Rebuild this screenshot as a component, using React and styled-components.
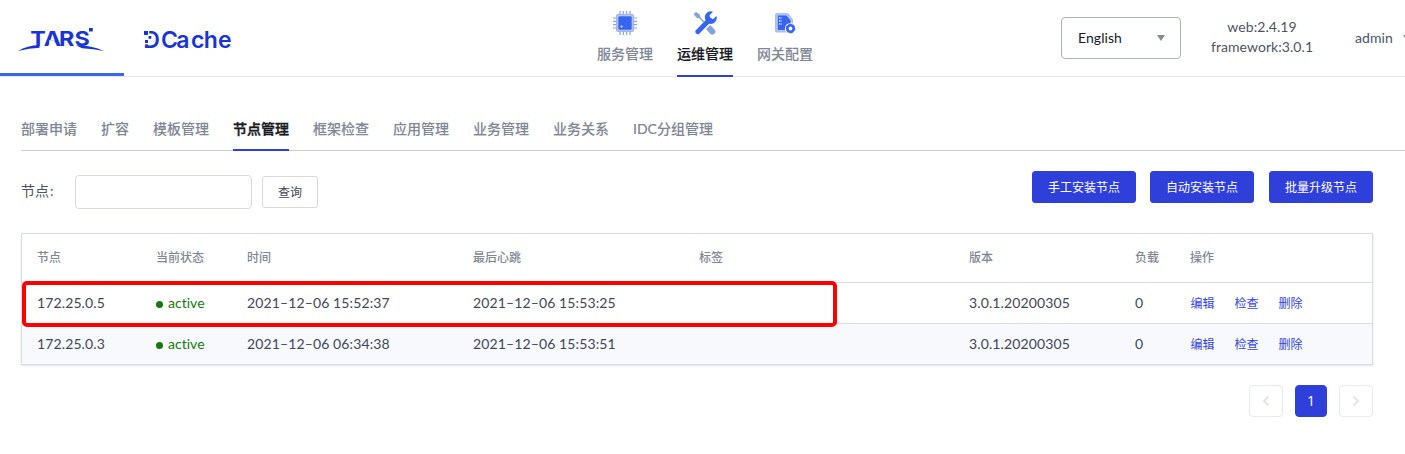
import React from "react";
import styled, { createGlobalStyle } from "styled-components";

const Global = createGlobalStyle`
  * { box-sizing: border-box; }
  body {
    margin: 0;
    background: #fff;
    overflow: hidden;
    color: #3f465a;
    font: 14px/20px Lato, "Noto Sans CJK SC", sans-serif;
  }
  button, input { font: inherit; }
`;

const Page = styled.div`
  height: 454px;
  overflow: hidden;
`;

const Header = styled.header`
  display: grid;
  grid-template-columns: 597px 464px 1fr;
  height: 77px;
  border-bottom: 1px solid #e4e6e8;
`;

const Brands = styled.div`
  display: flex;
  height: 76px;
`;

const Brand = styled.a`
  width: 124px;
  height: 76px;
  border-bottom: 3px solid ${(p) => (p.$active ? "#3a66f0" : "transparent")};
  svg { display: block; }
`;

const MainNav = styled.nav`
  display: flex;
  gap: 24px;
  height: 77px;
`;

const NavItem = styled.a`
  display: flex;
  flex-direction: column;
  align-items: center;
  width: 56px;
  padding-top: 11px;
  font-weight: 500;
  -webkit-text-stroke: ${(p) => (p.$active ? 0.2 : 0.08)}px currentColor;
  color: ${(p) => (p.$active ? "#17191f" : "#7f8796")};
  border-bottom: 2px solid ${(p) => (p.$active ? "#2f3fda" : "transparent")};
  svg { display: block; margin-bottom: 9px; }
`;

const Tools = styled.div`
  display: flex;
  align-items: flex-start;
  padding-top: 17px;
  white-space: nowrap;
  letter-spacing: 0.06px;
`;

const Select = styled.div`
  display: flex;
  align-items: center;
  justify-content: space-between;
  width: 120px;
  height: 42px;
  padding: 0 15px 0 16px;
  border: 1px solid #acb0c0;
  border-radius: 4px;
  color: #17191f;
`;

const Caret = styled.i`
  flex: none;
  border: solid transparent;
  border-width: 6px 4px 0;
  border-top-color: #838b9a;
`;

const Version = styled.div`
  width: 102px;
  margin-left: 30px;
  text-align: center;
  color: #4d5365;
`;

const User = styled.div`
  display: flex;
  align-items: center;
  gap: 10px;
  height: 42px;
  margin-left: 42px;
  color: #4d5365;
`;

const Main = styled.main`
  padding-left: 21px;
`;

const Tabs = styled.nav`
  display: flex;
  gap: 24px;
  height: 74px;
  border-bottom: 1px solid #cacbd6;
`;

const Tab = styled.a`
  height: 74px;
  padding-top: 42px;
  font-weight: 500;
  -webkit-text-stroke: ${(p) => (p.$active ? 0.4 : 0.08)}px currentColor;
  color: ${(p) => (p.$active ? "#17191f" : "#7f8796")};
  border-bottom: 2px solid ${(p) => (p.$active ? "#2f3fda" : "transparent")};
`;

const Content = styled.section`
  width: 1352px;
`;

const Toolbar = styled.div`
  display: flex;
  align-items: flex-start;
  justify-content: space-between;
  padding-top: 20px;
  height: 82px;
`;

const Search = styled.label`
  display: flex;
  align-items: center;
  padding-top: 4px;
  color: #4d5365;
`;

const SearchLabel = styled.span`
  width: 54px;
  padding-bottom: 2px;
  white-space: nowrap;
  i { font-style: normal; margin-left: 1px; }
`;

const Input = styled.input`
  width: 177px;
  height: 34px;
  border: 1px solid #d6d7e3;
  border-radius: 4px;
  margin: 0 10px 0 0;
`;

const Button = styled.button`
  height: 32px;
  padding: 1px 0 0;
  width: ${(p) => (p.$primary ? 104 : 56)}px;
  border: 1px solid ${(p) => (p.$primary ? "#2f3fda" : "#d6d7e3")};
  border-radius: 3px;
  background: ${(p) => (p.$primary ? "#2f3fda" : "#fff")};
  color: ${(p) => (p.$primary ? "#fff" : "#3f4454")};
  font-size: 12px;
  line-height: 18px;
`;

const Actions = styled.div`
  display: flex;
  gap: 14px;
  button:last-child { margin-left: 1px; }
`;

const Table = styled.div`
  position: relative;
  border: 1px solid #d9dbe7;
  box-shadow: 0 1px 2px rgba(60, 70, 130, 0.15);
`;

const Row = styled.div`
  display: grid;
  grid-template-columns: 119px 91px 226px 226px 270px 166px 55px 1fr;
  align-items: center;
  height: ${(p) => (p.$head ? 48 : 41)}px;
  padding-left: 15px;
  ${(p) => !p.$head && "border-top: 1px solid #d9dbe7;"}
  background: ${(p) => (p.$striped ? "#f8f9fc" : "#fff")};
  color: ${(p) => (p.$head ? "#7f8796" : "#3f465a")};
  font-size: ${(p) => (p.$head ? 12 : 14)}px;
  font-weight: ${(p) => (p.$head ? 500 : 400)};
  letter-spacing: ${(p) => (p.$head ? 0 : 0.12)}px;
`;

const Status = styled.span`
  display: flex;
  align-items: center;
  gap: 5px;
  letter-spacing: 0.02px;
  font-variant-ligatures: none;
  color: #147a0b;
  &::before {
    content: "";
    width: 7px;
    height: 7px;
    margin-top: 2px;
    border-radius: 50%;
    background: #147a0b;
  }
`;

const Links = styled.span`
  display: flex;
  gap: 20px;
  padding: 1px 0 0 0.5px;
  font-size: 12px;
  letter-spacing: 0;
  color: #3444dd;
`;

const Highlight = styled.div`
  position: absolute;
  left: 0;
  top: 47px;
  width: 815px;
  height: 46px;
  border: 4px solid #fe0000;
  border-radius: 5px;
`;

const Pagination = styled.div`
  display: flex;
  justify-content: flex-end;
  gap: 12px;
  padding-top: 20px;
`;

const PageButton = styled.button`
  display: flex;
  align-items: center;
  justify-content: center;
  width: ${(p) => (p.$active ? 32 : 34)}px;
  height: 32px;
  padding: 0;
  border: 1px solid ${(p) => (p.$active ? "#2f3fda" : "#e8e8f0")};
  border-radius: 4px;
  background: ${(p) => (p.$active ? "#2f3fda" : "#fff")};
  color: #fff;
  font-family: "Open Sans", sans-serif;
`;

const LogoText = styled.text`
  font-family: Inter, sans-serif;
  font-weight: ${(p) => p.$weight};
  font-size: ${(p) => p.$size}px;
  fill: #1735d6;
`;

const TarsLogo = () => (
  <svg width="124" height="73" viewBox="0 0 124 73">
    <LogoText $size={20.5} $weight={700} transform="scale(1.14 1)" x="26.6 38.4 51.8 65.4" y="46.5">TARS</LogoText>
    <rect x="49.2" y="40.2" width="5.5" height="3.2" fill="#fff" />
    <rect x="89" y="28" width="3.8" height="3.5" fill="#1735d6" />
    <path d="M18 51Q27 45.5 39.5 45V47.8Q29 48 18 51Z" fill="#1735d6" />
    <path d="M76 45.3Q92 45.3 104 51Q94 48.8 82 48.2Z" fill="#1735d6" />
  </svg>
);

const DCacheLogo = () => (
  <svg width="124" height="73" viewBox="0 0 124 73">
    <LogoText $size={23} $weight={600} x="19.3 37 52.3 67 79.8 94" y="47.5">DCache</LogoText>
    <rect x="19" y="30" width="6.2" height="14.3" fill="#fff" />
    <g fill="#1735d6">
      <rect x="20" y="31" width="4" height="4" />
      <rect x="24.5" y="36" width="2.8" height="2.8" />
      <rect x="21" y="40" width="3" height="3" />
    </g>
  </svg>
);

const ServiceIcon = () => (
  <svg width="24" height="24" viewBox="0 0 24 24">
    <path d="M7 0v24M10.3 0v24M13.7 0v24M17 0v24M0 7h24M0 10.3h24M0 13.7h24M0 17h24" stroke="#86a1dd" strokeWidth="1.2" />
    <rect x="3" y="3" width="18" height="18" rx="2" fill="#9db5ea" />
    <rect x="4.5" y="4.5" width="15" height="15" rx="1" fill="#c9d8f8" />
    <rect x="5.3" y="5.3" width="13.4" height="13.4" rx="1" fill="#3765f0" />
    <circle cx="8.5" cy="15.5" r="1.1" fill="#d7e2fb" />
  </svg>
);

const ToolsIcon = () => (
  <svg width="24" height="24" viewBox="0 0 24 24">
    <path d="M.8 3.5Q1.3 1.2 3.5 1.3L6.5 3.3 7.8 7.5 3.5 6.7Z" fill="#86a1dd" />
    <path d="m6 6 8 8" stroke="#86a1dd" strokeWidth="1.4" />
    <path d="m16 17 3.3 3.6" stroke="#86a1dd" strokeWidth="6" strokeLinecap="round" />
    <path d="M6 20.4 16.5 9.8" stroke="#fff" strokeWidth="6.8" />
    <path d="M4.8 20.8 16.5 8.8" stroke="#3765f0" strokeWidth="4.8" strokeLinecap="round" />
    <path d="M20 .8a6 6 0 0 0-7.2 8.8l3 3A6 6 0 0 0 23.4 5l-3.2 3-3-.5-.6-3.2Z" fill="#3765f0" />
  </svg>
);

const GatewayIcon = () => (
  <svg width="24" height="24" viewBox="0 0 24 24">
    <path d="M4 2h9.5q1.4 0 2.3 1.1L20 8.5v13H4a2 2 0 0 1-2-2V4a2 2 0 0 1 2-2Z" fill="#a9bfee" />
    <path d="M4.3 4h8.4q.8 0 1.3.6L18 9.5v10H4.3Z" fill="#3765f0" stroke="#d3dffa" strokeWidth=".7" />
    <path d="M6 7h2.6M6 10h2.6M6 13h2.6" stroke="#dfe8ff" strokeWidth="1.5" strokeDasharray="1.5 .6" />
    <circle cx="17.5" cy="17.5" r="5.6" fill="#fff" />
    <circle cx="17.5" cy="17.5" r="3.2" fill="none" stroke="#3765f0" strokeWidth="2.6" />
    <circle cx="17.5" cy="17.5" r="4.5" fill="none" stroke="#3765f0" strokeWidth=".8" strokeDasharray="2.4 2.3" />
  </svg>
);

const Arrow = ({ right }) => (
  <svg width="10" height="12" viewBox="0 0 10 12" fill="none" stroke="#e3e4ed" strokeWidth="2">
    <path d={right ? "m2.5 1.5 4.5 4.5-4.5 4.5" : "M7.5 1.5 3 6l4.5 4.5"} />
  </svg>
);

const nav = [
  ["服务管理", ServiceIcon],
  ["运维管理", ToolsIcon],
  ["网关配置", GatewayIcon],
];
const tabs = ["部署申请", "扩容", "模板管理", "节点管理", "框架检查", "应用管理", "业务管理", "业务关系", "IDC分组管理"];
const columns = ["节点", "当前状态", "时间", "最后心跳", "标签", "版本", "负载", "操作"];
const nodes = [
  { ip: "172.25.0.5", time: "2021–12–06 15:52:37", beat: "2021–12–06 15:53:25" },
  { ip: "172.25.0.3", time: "2021–12–06 06:34:38", beat: "2021–12–06 15:53:51" },
];

export default function App() {
  return (
    <Page>
      <Global />
      <Header>
        <Brands>
          <Brand $active><TarsLogo /></Brand>
          <Brand><DCacheLogo /></Brand>
        </Brands>
        <MainNav>
          {nav.map(([label, Icon]) => (
            <NavItem key={label} $active={label === "运维管理"}><Icon />{label}</NavItem>
          ))}
        </MainNav>
        <Tools>
          <Select>English<Caret /></Select>
          <Version>web:2.4.19<br />framework:3.0.1</Version>
          <User>admin<Caret /></User>
        </Tools>
      </Header>
      <Main>
        <Tabs>
          {tabs.map((label) => <Tab key={label} $active={label === "节点管理"}>{label}</Tab>)}
        </Tabs>
        <Content>
          <Toolbar>
            <Search>
              <SearchLabel>节点<i>:</i></SearchLabel>
              <Input />
              <Button>查询</Button>
            </Search>
            <Actions>
              <Button $primary>手工安装节点</Button>
              <Button $primary>自动安装节点</Button>
              <Button $primary>批量升级节点</Button>
            </Actions>
          </Toolbar>
          <Table>
            <Row $head>{columns.map((c) => <span key={c}>{c}</span>)}</Row>
            {nodes.map((n, i) => (
              <Row key={n.ip} $striped={i % 2 === 1}>
                <span>{n.ip}</span>
                <Status>active</Status>
                <span>{n.time}</span>
                <span>{n.beat}</span>
                <span />
                <span>3.0.1.20200305</span>
                <span>0</span>
                <Links><a>编辑</a><a>检查</a><a>删除</a></Links>
              </Row>
            ))}
            <Highlight />
          </Table>
          <Pagination>
            <PageButton><Arrow /></PageButton>
            <PageButton $active>1</PageButton>
            <PageButton><Arrow right /></PageButton>
          </Pagination>
        </Content>
      </Main>
    </Page>
  );
}
